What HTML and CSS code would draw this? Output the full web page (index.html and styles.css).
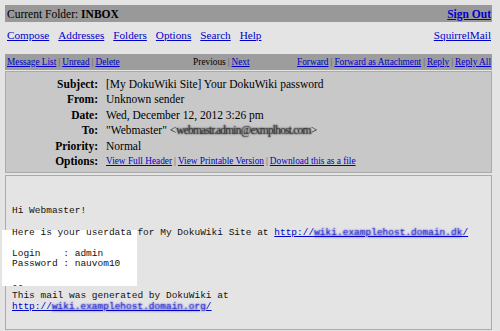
FILE: index.html
```html
<!DOCTYPE html>
<html>
<head>
<meta charset="utf-8">
<link rel="stylesheet" href="styles.css">
</head>
<body>
<div class="page">
  <div class="topbar">
    <span>Current Folder: <b>INBOX</b></span>
    <a href="#" class="signout">Sign Out</a>
  </div>
  <div class="nav">
    <div class="navlinks">
      <a href="#">Compose</a>
      <a href="#">Addresses</a>
      <a href="#">Folders</a>
      <a href="#">Options</a>
      <a href="#">Search</a>
      <a href="#">Help</a>
    </div>
    <a href="#">SquirrelMail</a>
  </div>
  <div class="msgbar">
    <div class="mb-left"><a href="#">Message List</a><span class="sep">|</span><a href="#">Unread</a><span class="sep">|</span><a href="#">Delete</a></div>
    <div class="mb-center">Previous<span class="sep">|</span><a href="#">Next</a></div>
    <div class="mb-right"><a href="#">Forward</a><span class="sep">|</span><a href="#">Forward as Attachment</a><span class="sep">|</span><a href="#">Reply</a><span class="sep">|</span><a href="#">Reply All</a></div>
  </div>
  <div class="headers">
    <div class="lbl">Subject:</div><div class="val">[My DokuWiki Site] Your DokuWiki password</div>
    <div class="lbl">From:</div><div class="val">Unknown sender</div>
    <div class="lbl">Date:</div><div class="val">Wed, December 12, 2012 3:26 pm</div>
    <div class="lbl">To:</div><div class="val">"Webmaster" &lt;<span class="blur">webmastr.admin@exmplhost.com</span>&gt;</div>
    <div class="lbl">Priority:</div><div class="val">Normal</div>
    <div class="lbl">Options:</div><div class="val small"><a href="#">View Full Header</a><span class="sep">|</span><a href="#">View Printable Version</a><span class="sep">|</span><a href="#">Download this as a file</a></div>
  </div>
  <div class="body">
    <div class="highlight"></div>
<pre class="mail">Hi Webmaster!

Here is your userdata for My DokuWiki Site at <a href="#">http://<span class="blur-link">wiki.examplehost.domain.dk</span>/</a>

Login    : admin
Password : nauvom10

--
This mail was generated by DokuWiki at
<a href="#">http://<span class="blur-link">wiki.examplehost.domain.org</span>/</a></pre>
  </div>
</div>
</body>
</html>
```
FILE: styles.css
```css
html, body {
  margin: 0;
  padding: 0;
  background: #e4e4e4;
}
body {
  font-family: "Liberation Serif", "Times New Roman", serif;
  color: #000;
  font-size: 11.5px;
}
a {
  color: #0000cc;
}
.page {
  padding: 5px 8px 0 5px;
}
.topbar {
  display: flex;
  justify-content: space-between;
  align-items: center;
  background: #999999;
  height: 17px;
  padding: 0 1px 0 2px;
}
.signout {
  font-weight: bold;
}
.nav {
  display: flex;
  justify-content: space-between;
  align-items: center;
  height: 25px;
  padding: 0 1px 0 2px;
  margin-bottom: 7px;
  font-size: 11.2px;
}
.navlinks {
  display: flex;
  gap: 9px;
}
.msgbar {
  display: flex;
  align-items: center;
  background: #9d9d9d;
  height: 16px;
  padding: 0 1px 0 2px;
  font-size: 9.3px;
  white-space: nowrap;
}
.mb-center {
  flex: 1;
  text-align: center;
  padding-left: 26px;
}
.sep {
  color: #555;
  margin: 0 2px;
}
.headers {
  margin-top: 1px;
  background: #c8c8c8;
  border: 1px solid #aaaaaa;
  display: grid;
  grid-template-columns: 92px 1fr;
  column-gap: 8px;
  padding: 5px 0 3px;
  line-height: 15.4px;
}
.lbl {
  text-align: right;
  font-weight: bold;
}
.val.small {
  font-size: 9.3px;
}
.blur {
  color: transparent;
  text-shadow: 0 0 1px #222, 0 0 2px #444;
  letter-spacing: -0.8px;
}
.body {
  position: relative;
  margin-top: 2px;
  background: #e4e4e4;
  border: 1px solid #aaaaaa;
  height: 155px;
  padding: 30px 0 0 6px;
  box-sizing: border-box;
}
.highlight {
  position: absolute;
  left: -4px;
  top: 54px;
  width: 135px;
  height: 56px;
  background: #ffffff;
}
.mail {
  position: relative;
  margin: 0;
  font-family: "Liberation Mono", "Courier New", monospace;
  font-size: 9.5px;
  line-height: 10.6px;
  color: #111;
}
.blur-link {
  color: transparent;
  text-shadow: 0 0 1px #2222cc, 0 0 2px #5555dd;
}
```
